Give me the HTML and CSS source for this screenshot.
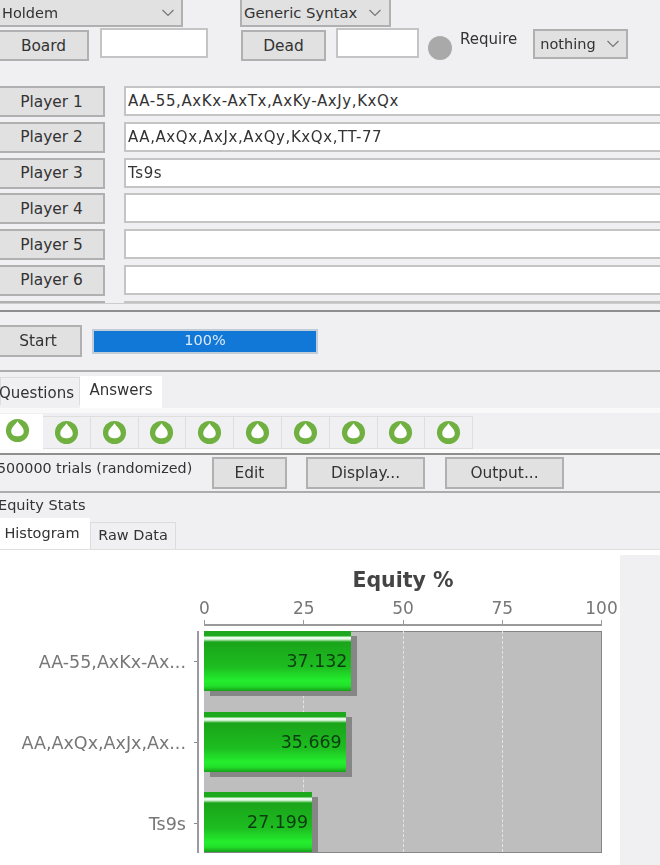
FILE: index.html
```html
<!DOCTYPE html>
<html lang="en">
<head>
    <meta charset="UTF-8">
    <meta name="viewport" content="width=device-width, initial-scale=1.0">
    <title>Equity Calculator</title>
    <link rel="stylesheet" href="styles.css">
</head>
<body>
    <svg class="defs" width="0" height="0">
        <symbol id="chevron" viewBox="0 0 14 8">
            <path d="M1.500 1l5.500 5.500 5.500-5.500" fill="none" stroke="#777" stroke-width="1.200"/>
        </symbol>
        <symbol id="hand" viewBox="0 0 26 26">
            <circle cx="13" cy="13" r="12" fill="#6fb040"/>
            <path d="M13 3.500c1.500 3 6.500 6 6.500 10.500 0 3.400-3.500 5-6.500 5s-6.500-1.600-6.500-5c0-4.500 5-7.500 6.500-10.500z" fill="#fff"/>
        </symbol>
    </svg>

    <div class="top-row">
        <div class="combo combo-game">Holdem <svg class="chevron"><use href="#chevron"/></svg></div>
        <div class="combo combo-syntax">Generic Syntax <svg class="chevron"><use href="#chevron"/></svg></div>
    </div>

    <div class="board-row">
        <button class="button btn-board">Board</button>
        <input class="field field-board">
        <button class="button btn-dead">Dead</button>
        <input class="field field-dead">
        <span class="status-dot"></span>
        <span class="require-label">Require</span>
        <div class="combo combo-require">nothing <svg class="chevron"><use href="#chevron"/></svg></div>
    </div>

    <div class="players">
        <button class="button">Player 1</button><input class="field" value="AA-55,AxKx-AxTx,AxKy-AxJy,KxQx">
        <button class="button">Player 2</button><input class="field" value="AA,AxQx,AxJx,AxQy,KxQx,TT-77">
        <button class="button">Player 3</button><input class="field" value="Ts9s">
        <button class="button">Player 4</button><input class="field">
        <button class="button">Player 5</button><input class="field">
        <button class="button">Player 6</button><input class="field">
        <button class="button">Player 7</button><input class="field">
    </div>

    <div class="run-row">
        <button class="button btn-start">Start</button>
        <div class="progress">100%</div>
    </div>

    <div class="tabs question-tabs">
        <div class="tab tab-questions">Questions</div>
        <div class="tab tab-active tab-answers">Answers</div>
    </div>

    <div class="hand-tabs">
        <div class="hand-tab hand-tab-active"><svg class="hand-icon"><use href="#hand"/></svg></div>
        <div class="hand-tab"><svg class="hand-icon"><use href="#hand"/></svg></div>
        <div class="hand-tab"><svg class="hand-icon"><use href="#hand"/></svg></div>
        <div class="hand-tab"><svg class="hand-icon"><use href="#hand"/></svg></div>
        <div class="hand-tab"><svg class="hand-icon"><use href="#hand"/></svg></div>
        <div class="hand-tab"><svg class="hand-icon"><use href="#hand"/></svg></div>
        <div class="hand-tab"><svg class="hand-icon"><use href="#hand"/></svg></div>
        <div class="hand-tab"><svg class="hand-icon"><use href="#hand"/></svg></div>
        <div class="hand-tab"><svg class="hand-icon"><use href="#hand"/></svg></div>
        <div class="hand-tab"><svg class="hand-icon"><use href="#hand"/></svg></div>
    </div>

    <div class="trials-row">
        <span class="trials-label">500000 trials (randomized)</span>
        <button class="button btn-edit">Edit</button>
        <button class="button btn-display">Display...</button>
        <button class="button btn-output">Output...</button>
    </div>

    <div class="stats-title">Equity Stats</div>

    <div class="tabs stats-tabs">
        <div class="tab tab-active tab-histogram">Histogram</div>
        <div class="tab tab-raw">Raw Data</div>
    </div>

    <div class="chart-area">
        <div class="chart">
            <h2 class="chart-title">Equity %</h2>
            <div class="x-axis">
                <div class="x-tick"><span>0</span></div>
                <div class="x-tick"><span>25</span></div>
                <div class="x-tick"><span>50</span></div>
                <div class="x-tick"><span>75</span></div>
                <div class="x-tick"><span>100</span></div>
            </div>
            <div class="plot-row">
                <div class="y-axis">
                    <div class="y-label">AA-55,AxKx-Ax...</div>
                    <div class="y-label">AA,AxQx,AxJx,Ax...</div>
                    <div class="y-label">Ts9s</div>
                </div>
                <div class="plot">
                    <span class="grid-line" style="left: 25%"></span>
                    <span class="grid-line" style="left: 50%"></span>
                    <span class="grid-line" style="left: 75%"></span>
                    <div class="bar" style="width: 37.132%">37.132</div>
                    <div class="bar" style="width: 35.669%">35.669</div>
                    <div class="bar" style="width: 27.199%">27.199</div>
                </div>
            </div>
        </div>
        <div class="side-panel"></div>
    </div>
</body>
</html>
```

FILE: styles.css
```css
* {
    box-sizing: border-box;
}
html, body {
    height: 865px;
    overflow: hidden;
}
body {
    margin: 0;
    background-color: #f0f0f2;
    color: #333;
    font-family: "DejaVu Sans", sans-serif;
    font-size: 14.5px;
    line-height: 20px;
    filter: blur(0.5px);
}
.defs {
    position: absolute;
}
.button {
    height: 31px;
    padding: 0;
    background-color: #e1e1e1;
    border: 2px solid #b0b0b0;
    color: #333;
    font: inherit;
    font-size: 15.400px;
}
.field {
    height: 30px;
    padding: 0 2px;
    background-color: #fff;
    border: 2px solid #c4c4c4;
    color: #333;
    font: inherit;
    font-size: 15px;
    letter-spacing: 0.6px;
    outline: none;
}
.combo {
    display: flex;
    align-items: center;
    justify-content: space-between;
    background-color: #e1e1e1;
    border: 2px solid #b0b0b0;
}
.chevron {
    width: 14px;
    height: 8px;
    flex: none;
}

/* top rows */
.top-row {
    display: flex;
    height: 27px;
}
.combo-game {
    width: 186px;
    height: 29px;
    margin: -2px 0 0 -3px;
    padding: 0 6px 0 3px;
}
.combo-syntax {
    width: 151px;
    height: 29px;
    margin: -2px 0 0 57px;
    padding: 0 7px 0 2px;
    font-size: 14.800px;
}
.board-row {
    display: flex;
    align-items: flex-start;
    height: 35px;
    padding-top: 1px;
}
.btn-board {
    width: 91px;
    margin: 2px 0 0 -2px;
}
.field-board {
    width: 108px;
    margin-left: 11px;
}
.btn-dead {
    width: 85px;
    margin: 2px 0 0 33px;
}
.field-dead {
    width: 83px;
    margin-left: 10px;
}
.status-dot {
    width: 24px;
    height: 24px;
    margin: 8px 0 0 9px;
    background-color: #a9a9a9;
    border-radius: 50%;
}
.require-label {
    margin: 1px 0 0 8px;
    font-size: 15px;
}
.combo-require {
    width: 95px;
    height: 30px;
    margin: 1px 0 0 16px;
    padding: 0 6px 0 5px;
}

/* players */
.players {
    display: grid;
    grid-template-columns: 107px 1fr;
    grid-auto-rows: 31px;
    column-gap: 19px;
    row-gap: 4.75px;
    height: 218px;
    margin: 24px -10px 0 -2px;
    overflow: hidden;
    border-bottom: 1px solid #ccc;
}

/* start + progress */
.run-row {
    display: flex;
    align-items: center;
    gap: 10px;
    height: 62px;
    margin-top: 6px;
    border-top: 2px solid #8e8e8e;
    border-bottom: 2px solid #acacac;
}
.btn-start {
    width: 85px;
    height: 32px;
    margin-left: -3px;
    padding-right: 3px;
}
.progress {
    width: 226px;
    height: 25px;
    background-color: #1278d8;
    border: 2px solid #c0ccd8;
    color: #dbe9f7;
    line-height: 18px;
    text-align: center;
}

/* tabs */
.tabs {
    display: flex;
    align-items: flex-end;
}
.tab {
    text-align: center;
    background-color: #f0f0f2;
    border: 1px solid #dcdcdc;
    border-bottom: none;
}
.tab-active {
    background-color: #fff;
    border-color: #fff;
}
.question-tabs {
    height: 32px;
    margin-top: 4px;
}
.tab-questions {
    width: 80px;
    height: 28px;
    margin-bottom: 3px;
    padding-top: 5px;
    white-space: nowrap;
    text-indent: -7px;
    font-size: 15px;
}
.tab-answers {
    width: 82px;
    height: 32px;
    padding-top: 3px;
    font-size: 15px;
}
.hand-tabs {
    display: flex;
    align-items: flex-end;
    height: 45px;
    padding-top: 1px;
    background-color: #f0f0f2;
    border-top: 5px solid #f9f9fa;
    border-bottom: 4px solid #fbfbfb;
}
.hand-tab {
    display: flex;
    align-items: center;
    justify-content: center;
    width: 47.800px;
    height: 33px;
    background-color: #f0f0f2;
    border: 1px solid #dedede;
    border-left: none;
}
.hand-tab-active {
    width: 43px;
    height: 35px;
    padding: 0 8px 3px 0;
    background-color: #fff;
    border-color: #fff;
}
.hand-icon {
    width: 25px;
    height: 25px;
}

/* trials row */
.trials-row {
    display: flex;
    align-items: center;
    height: 40px;
    border-top: 2px solid #8e8e8e;
    border-bottom: 2px solid #acacac;
}
.trials-label {
    width: 215px;
    margin: -11px 0 0 -3px;
    font-size: 14.300px;
    white-space: nowrap;
}
.btn-edit {
    width: 75px;
    height: 32px;
}
.btn-display {
    width: 119px;
    height: 32px;
    margin-left: 19px;
}
.btn-output {
    width: 119px;
    height: 32px;
    margin-left: 20px;
}
.stats-title {
    height: 25px;
    margin-left: -2px;
    padding-top: 2px;
}
.stats-tabs {
    height: 32px;
    border-bottom: 1px solid #e0e0e0;
}
.tab-histogram {
    width: 90px;
    height: 31px;
    padding: 4px 6px 0 0;
}
.tab-raw {
    width: 86px;
    height: 27px;
    padding-top: 2px;
}

/* chart */
.chart-area {
    display: flex;
    height: 315px;
    background-color: #fff;
}
.chart {
    width: 620px;
    padding-top: 19px;
    color: #777;
}
.chart-title {
    width: 398px;
    height: 22px;
    margin: 0 0 0 204px;
    color: #444;
    font-size: 20.500px;
    font-weight: bold;
    line-height: 22px;
    text-align: center;
}
.x-axis {
    display: flex;
    justify-content: space-between;
    width: 398px;
    height: 35px;
    margin-left: 204px;
    border-bottom: 2px solid #9a9a9a;
}
.x-tick {
    display: flex;
    flex-direction: column;
    align-items: center;
    justify-content: space-between;
    width: 1px;
    padding-top: 7px;
    white-space: nowrap;
    font-size: 17px;
}
.x-tick::after {
    content: "";
    width: 1px;
    height: 4px;
    background-color: #9a9a9a;
}
.plot-row {
    display: flex;
    margin-top: 5px;
}
.y-axis {
    display: flex;
    flex-direction: column;
    justify-content: space-between;
    width: 199px;
    height: 222px;
    margin-right: 5px;
    border-right: 2px solid #9a9aa2;
}
.y-label {
    display: flex;
    align-items: center;
    justify-content: flex-end;
    gap: 8px;
    height: 60px;
    padding-top: 1px;
    font-size: 17.500px;
    white-space: nowrap;
}
.y-label::after {
    content: "";
    width: 3px;
    height: 1px;
    background-color: #888;
}
.plot {
    position: relative;
    display: flex;
    flex-direction: column;
    justify-content: space-between;
    width: 398px;
    height: 222px;
    overflow: hidden;
    background-color: #bebebe;
    border-right: 1px solid #858585;
    border-bottom: 1px solid #858585;
}
.plot::before {
    content: "";
    position: absolute;
    top: 0;
    left: 0;
    right: 0;
    height: 1px;
    background-color: #858585;
}
.grid-line {
    position: absolute;
    top: 0;
    bottom: 0;
    border-left: 1px dashed #e4e4e4;
}
.bar {
    position: relative;
    flex: none;
    height: 60px;
    padding: 5px 4px 0 0;
    background: linear-gradient(#1ea81e 0 5px, #e8fbe8 6px 8px, #1aa41a 11px, #1dbd20 36px, #24ee2e 50px, #22e02a 55px, #16a018 60px);
    box-shadow: 6px 5px 0 #868686;
    color: #0c3c10;
    font-size: 17.400px;
    line-height: 51px;
    text-align: right;
}
.side-panel {
    width: 40px;
    margin-top: 5px;
    background-color: #f0f0f2;
}
```
